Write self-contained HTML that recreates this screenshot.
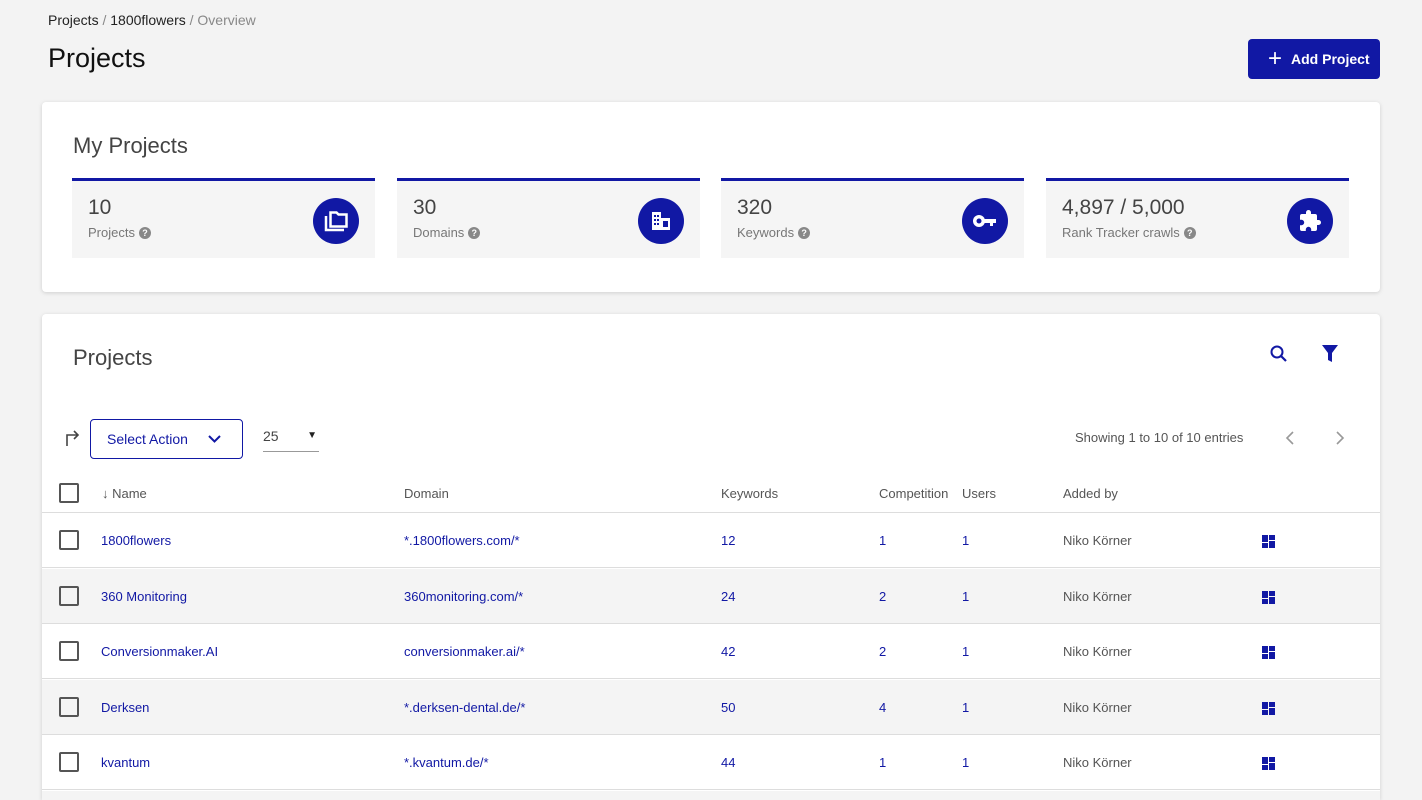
<!DOCTYPE html>
<html><head><style>
*{box-sizing:border-box;margin:0;padding:0}
html,body{width:1422px;height:800px;overflow:hidden}
body{background:#f3f3f3;font-family:"Liberation Sans",sans-serif;color:#222;position:relative}
.abs{position:absolute}
.blue{color:#1118a4}
.card{position:absolute;left:42px;width:1338px;background:#fff;border-radius:4px;box-shadow:0 1px 4px rgba(0,0,0,.15);overflow:hidden}
.stat{position:absolute;top:76px;width:303px;height:80px;background:#f5f5f5;border-top:3px solid #1118a4}
.stat .n{position:absolute;left:16px;top:15px;font-size:21px;color:#444}
.stat .l{position:absolute;left:16px;top:44px;font-size:13px;color:#777}
.q{display:inline-block;width:12px;height:12px;border-radius:50%;background:#888;color:#fff;font-size:9px;text-align:center;line-height:12px;font-weight:bold;vertical-align:1px;margin-left:4px}
.ic{position:absolute;right:16px;top:17px;width:46px;height:46px;border-radius:50%;background:#1118a4;display:flex;align-items:center;justify-content:center}
.row{position:absolute;left:0;width:1338px;height:55px;border-bottom:1px solid #ddd;font-size:13px}
.row span{position:absolute;top:20px}
.cb{position:absolute;left:17px;width:20px;height:20px;border:2px solid #555;border-radius:2px}
.th{position:absolute;top:172px;font-size:13px;color:#555}
.gi{position:absolute;left:1220px;top:22px;width:13px;height:13px}
</style></head><body>
<div class="abs" style="left:48px;top:12px;font-size:14px">Projects <span style="color:#888">/</span> 1800flowers <span style="color:#888">/ Overview</span></div>
<div class="abs" style="left:48px;top:43px;font-size:27px;color:#111">Projects</div>
<div class="abs" style="left:1248px;top:39px;width:132px;height:40px;background:#1118a4;border-radius:4px;color:#fff;font-size:14px;font-weight:bold;line-height:40px;padding-left:43px">Add Project<span style="position:absolute;left:20px;top:0;font-size:24px;font-weight:normal">+</span></div>

<div class="card" style="top:102px;height:190px">
<div class="abs" style="left:31px;top:31px;font-size:22px;color:#444">My Projects</div>
<div class="stat" style="left:30px"><div class="n">10</div><div class="l">Projects<span class="q">?</span></div><div class="ic"><svg width="26" height="22" viewBox="0 0 26 22"><path d="M3 6v14h18" fill="none" stroke="#fff" stroke-width="2.5"/><path d="M7.5 2.5h6l2 2h8v12h-16z" fill="none" stroke="#fff" stroke-width="2.5"/></svg></div></div>
<div class="stat" style="left:355px"><div class="n">30</div><div class="l">Domains<span class="q">?</span></div><div class="ic"><svg width="22" height="22" viewBox="0 0 22 22"><rect x="2" y="2" width="9" height="18" fill="#fff"/><rect x="11" y="8" width="9" height="12" fill="#fff"/><g fill="#1118a4"><rect x="4" y="5" width="2" height="2"/><rect x="7" y="5" width="2" height="2"/><rect x="4" y="9" width="2" height="2"/><rect x="7" y="9" width="2" height="2"/><rect x="4" y="13" width="2" height="2"/><rect x="7" y="13" width="2" height="2"/><rect x="13" y="11" width="5" height="6"/></g></svg></div></div>
<div class="stat" style="left:679px"><div class="n">320</div><div class="l">Keywords<span class="q">?</span></div><div class="ic"><svg width="26" height="16" viewBox="0 0 26 16"><circle cx="7" cy="8" r="6" fill="#fff"/><circle cx="7" cy="8" r="2.5" fill="#1118a4"/><rect x="11" y="6" width="13" height="4" fill="#fff"/><rect x="18" y="8" width="3" height="5" fill="#fff"/></svg></div></div>
<div class="stat" style="left:1004px"><div class="n">4,897 / 5,000</div><div class="l">Rank Tracker crawls<span class="q">?</span></div><div class="ic"><svg width="24" height="24" viewBox="0 0 24 24"><path d="M20.5 11H19V7a2 2 0 0 0-2-2h-4V3.5a2.5 2.5 0 0 0-5 0V5H4a2 2 0 0 0-2 2v3.8h1.5a2.7 2.7 0 0 1 0 5.4H2V20a2 2 0 0 0 2 2h3.8v-1.5a2.7 2.7 0 0 1 5.4 0V22H17a2 2 0 0 0 2-2v-4h1.5a2.5 2.5 0 0 0 0-5z" fill="#fff"/></svg></div></div>
</div>

<div class="card" style="top:314px;height:486px;border-radius:4px 4px 0 0">
<div class="abs" style="left:31px;top:31px;font-size:22px;color:#444">Projects</div>
<svg class="abs" style="left:1227px;top:30px" width="20" height="20" viewBox="0 0 20 20"><circle cx="8" cy="8" r="5.5" fill="none" stroke="#1118a4" stroke-width="2"/><path d="M12 12l5 5" stroke="#1118a4" stroke-width="2.2"/></svg>
<svg class="abs" style="left:1279px;top:30px" width="18" height="20" viewBox="0 0 18 20"><path d="M1 1h16l-6 8v9l-4-2V9z" fill="#1118a4"/></svg>
<svg class="abs" style="left:22px;top:115px" width="18" height="18" viewBox="0 0 18 18"><path d="M3 17V6h11M10 2l4 4-4 4" fill="none" stroke="#444" stroke-width="1.6"/></svg>
<div class="abs" style="left:48px;top:105px;width:153px;height:40px;border:1px solid #1118a4;border-radius:4px;font-size:14px;color:#1118a4;line-height:38px;padding-left:16px">Select Action<svg style="position:absolute;left:117px;top:15px" width="13" height="9" viewBox="0 0 13 9"><path d="M1 1l5.5 5.5L12 1" fill="none" stroke="#1118a4" stroke-width="2"/></svg></div>
<div class="abs" style="left:221px;top:114px;width:56px;height:24px;border-bottom:1px solid #999;font-size:14px;color:#444">25<span style="position:absolute;right:2px;top:2px;font-size:10px;color:#222">▼</span></div>
<div class="abs" style="left:1033px;top:116px;font-size:13px;color:#555">Showing 1 to 10 of 10 entries</div>
<svg class="abs" style="left:1243px;top:117px" width="10" height="14" viewBox="0 0 10 14"><path d="M8 1L2 7l6 6" fill="none" stroke="#999" stroke-width="1.6"/></svg>
<svg class="abs" style="left:1293px;top:117px" width="10" height="14" viewBox="0 0 10 14"><path d="M2 1l6 6-6 6" fill="none" stroke="#999" stroke-width="1.6"/></svg>
<div class="cb" style="top:169px"></div>
<div class="th blue" style="left:60px">↓ Name</div>
<div class="th" style="left:362px">Domain</div>
<div class="th" style="left:679px">Keywords</div>
<div class="th" style="left:837px">Competition</div>
<div class="th" style="left:920px">Users</div>
<div class="th" style="left:1021px">Added by</div>
<div class="abs" style="left:0;top:198px;width:1338px;border-top:1px solid #ddd"></div>

<div class="row" style="top:199px"><div class="cb" style="top:17px"></div><span class="blue" style="left:59px">1800flowers</span><span class="blue" style="left:362px">*.1800flowers.com/*</span><span class="blue" style="left:679px">12</span><span class="blue" style="left:837px">1</span><span class="blue" style="left:920px">1</span><span style="left:1021px;color:#555">Niko Körner</span><svg class="gi" viewBox="0 0 13 13"><path d="M0 0h6v7H0zM7 0h6v5H7zM7 6h6v7H7zM0 8h6v5H0z" fill="#1118a4"/></svg></div>
<div class="row" style="top:255px;background:#f4f4f4"><div class="cb" style="top:17px"></div><span class="blue" style="left:59px">360 Monitoring</span><span class="blue" style="left:362px">360monitoring.com/*</span><span class="blue" style="left:679px">24</span><span class="blue" style="left:837px">2</span><span class="blue" style="left:920px">1</span><span style="left:1021px;color:#555">Niko Körner</span><svg class="gi" viewBox="0 0 13 13"><path d="M0 0h6v7H0zM7 0h6v5H7zM7 6h6v7H7zM0 8h6v5H0z" fill="#1118a4"/></svg></div>
<div class="row" style="top:310px"><div class="cb" style="top:17px"></div><span class="blue" style="left:59px">Conversionmaker.AI</span><span class="blue" style="left:362px">conversionmaker.ai/*</span><span class="blue" style="left:679px">42</span><span class="blue" style="left:837px">2</span><span class="blue" style="left:920px">1</span><span style="left:1021px;color:#555">Niko Körner</span><svg class="gi" viewBox="0 0 13 13"><path d="M0 0h6v7H0zM7 0h6v5H7zM7 6h6v7H7zM0 8h6v5H0z" fill="#1118a4"/></svg></div>
<div class="row" style="top:366px;background:#f4f4f4"><div class="cb" style="top:17px"></div><span class="blue" style="left:59px">Derksen</span><span class="blue" style="left:362px">*.derksen-dental.de/*</span><span class="blue" style="left:679px">50</span><span class="blue" style="left:837px">4</span><span class="blue" style="left:920px">1</span><span style="left:1021px;color:#555">Niko Körner</span><svg class="gi" viewBox="0 0 13 13"><path d="M0 0h6v7H0zM7 0h6v5H7zM7 6h6v7H7zM0 8h6v5H0z" fill="#1118a4"/></svg></div>
<div class="row" style="top:421px"><div class="cb" style="top:17px"></div><span class="blue" style="left:59px">kvantum</span><span class="blue" style="left:362px">*.kvantum.de/*</span><span class="blue" style="left:679px">44</span><span class="blue" style="left:837px">1</span><span class="blue" style="left:920px">1</span><span style="left:1021px;color:#555">Niko Körner</span><svg class="gi" viewBox="0 0 13 13"><path d="M0 0h6v7H0zM7 0h6v5H7zM7 6h6v7H7zM0 8h6v5H0z" fill="#1118a4"/></svg></div>
<div class="abs" style="left:0;top:477px;width:1338px;height:9px;background:#f4f4f4"></div>
</div>
</body></html>
